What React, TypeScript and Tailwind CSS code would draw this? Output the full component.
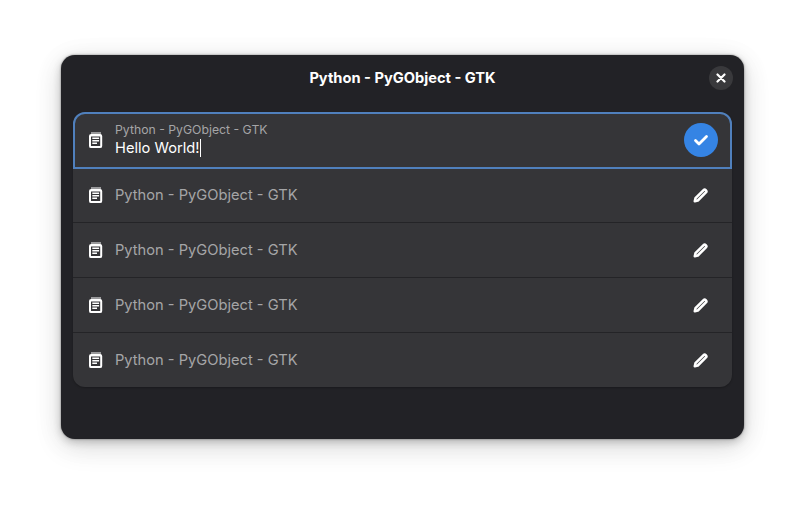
const TITLE = 'Python - PyGObject - GTK';

function NoteIcon() {
  return (
    <svg width="16" height="18" viewBox="0 0 16 18" className="shrink-0">
      <path
        fill="#fff"
        d="M3.500 1h1v3h-1zM5.500 1h1v3h-1zM7.500 1h1v3h-1zM9.500 1h1v3h-1zM11.500 1h1v3h-1z"
      />
      <rect x="2" y="3.900" width="11.200" height="12.200" rx="1.200" fill="none" stroke="#fff" strokeWidth="2" />
      <path fill="#fff" d="M4.300 6.500h6.800v1.400H4.300zM4.300 9h6.800v1.400H4.300zM4.300 11.500h4.700v1.400H4.300z" />
      <path fill="#fff" d="M2 4h11v1.500H2z" />
    </svg>
  );
}

function PencilIcon() {
  return (
    <svg width="16" height="16" viewBox="0 0 16 16">
      <path
        d="M1.800 14.200l.7-3l8.100-8.100a1.500 1.500 0 0 1 2.100 0l.2.200a1.500 1.500 0 0 1 0 2.100l-8.100 8.100-3 .7Z"
        fill="none"
        stroke="#fff"
        strokeWidth="2.600"
        strokeLinejoin="round"
      />
    </svg>
  );
}

function EditingRow() {
  return (
    <div className="relative -mb-px flex h-[57px] items-center rounded-t-[12px] border-2 border-[#5080bd] bg-[#353538] pb-px pl-[13px] pr-[12px]">
      <NoteIcon />
      <div className="ml-[11px] flex-1">
        <div className="text-[12.25px] leading-[15px] text-[#a5a5a7]">{TITLE}</div>
        <div className="mt-px flex h-[20px] items-center text-[14.67px] leading-[20px] text-white">
          Hello World!
          <span className="ml-px h-[18px] w-px bg-white" />
        </div>
      </div>
      <button className="flex h-[34px] w-[34px] items-center justify-center rounded-full bg-[#3584e4]">
        <svg width="16" height="16" viewBox="0 0 16 16">
          <path
            d="M2.500 8.500l3.500 3.500 7.500-7.500"
            fill="none"
            stroke="#fff"
            strokeWidth="2.800"
            strokeLinecap="round"
            strokeLinejoin="round"
          />
        </svg>
      </button>
    </div>
  );
}

function Row({ last }: { last?: boolean }) {
  return (
    <div
      className={
        last
          ? 'flex h-[54px] items-center pl-[15px] pr-[23px]'
          : 'flex h-[55px] items-center border-b border-[#242427] pl-[15px] pr-[23px]'
      }
    >
      <NoteIcon />
      <div className="ml-[11px] flex-1 text-[14.67px] text-[#a5a5a7]">{TITLE}</div>
      <PencilIcon />
    </div>
  );
}

export default function App() {
  return (
    <div className="h-[506px] w-[805px] bg-white pl-[61px] pt-[55px] font-['Inter',sans-serif]">
      <div className="h-[384px] w-[683px] rounded-[14px] bg-[#222226] shadow-[0_0_2px_rgba(0,0,0,0.5),0_3px_9px_rgba(0,0,0,0.2),0_8px_28px_rgba(0,0,0,0.12),0_4px_28px_2px_rgba(0,0,0,0.05)]">
        <header className="relative flex h-[46px] items-center justify-center">
          <h1 className="text-[14.67px] font-bold text-white">{TITLE}</h1>
          <button className="absolute right-[11px] top-[11px] flex h-6 w-6 items-center justify-center rounded-full bg-[#39393c]">
            <svg width="10" height="10" viewBox="0 0 10 10">
              <path d="M1.500 1.500l7 7M8.500 1.500l-7 7" stroke="#fff" strokeWidth="2.200" strokeLinecap="round" />
            </svg>
          </button>
        </header>
        <div className="mx-[12px] mt-[11px] w-[659px] rounded-[12px] bg-[#353538] shadow-[0_1px_2px_rgba(0,0,0,0.25)]">
          <EditingRow />
          <Row />
          <Row />
          <Row />
          <Row last />
        </div>
      </div>
    </div>
  );
}
